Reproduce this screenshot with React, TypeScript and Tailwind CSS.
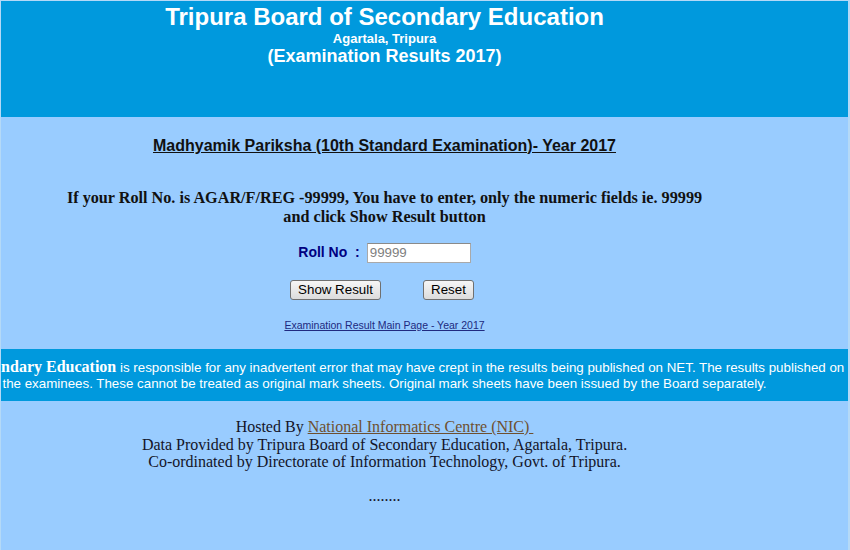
// Tripura Board result lookup page (TBSE 2017).
export default function App() {
  return (
    <div className="min-h-screen bg-[#b4d9f7] pl-px pr-[2px] pt-px font-['Liberation_Sans',Arial,sans-serif]">
      <div className="min-h-[549px] bg-[#99ccff]">
        {/* Bandeau */}
        <header className="h-[116px] bg-[#0099dd] pt-[2px] text-white">
          <div className="w-[767px] text-center font-bold leading-[normal]">
            <h1 className="text-[24px]">Tripura Board of Secondary Education</h1>
            <p className="text-[13px]">Agartala, Tripura</p>
            <p className="text-[18px]">(Examination Results 2017)</p>
          </div>
        </header>

        {/* Formulaire */}
        <main className="w-[767px] pt-[20px] text-center">
          <h2 className="text-[16px] font-bold leading-[normal] text-[#111] underline">
            Madhyamik Pariksha (10th Standard Examination)- Year 2017
          </h2>
          <p className="mt-[34px] font-['Liberation_Serif','Times_New_Roman',serif] text-[16.2px] font-bold leading-[normal] text-[#111]">
            If your Roll No. is AGAR/F/REG -99999, You have to enter, only the numeric fields ie. 99999
            <br />
            and click Show Result button
          </p>

          <div className="mt-[15px] flex items-center justify-center gap-[7px]">
            <label className="text-[14px] font-bold text-[#000080]">Roll No&nbsp; :</label>
            <input
              className="h-[20px] w-[104px] border border-[#a9a9a9] border-t-[#8a8a8a] bg-white px-[2px] text-[13.33px] text-[#808080] outline-none"
              defaultValue="99999"
            />
          </div>

          <div className="mt-[17px] flex items-center justify-center gap-[42px] pr-[5px]">
            <button className="h-[20px] w-[91px] rounded-[3px] border border-[#707070] bg-gradient-to-b from-[#f6f6f6] to-[#dcdcdc] text-[13.33px] leading-none text-black">
              Show Result
            </button>
            <button className="h-[20px] w-[51px] rounded-[3px] border border-[#707070] bg-gradient-to-b from-[#f6f6f6] to-[#dcdcdc] text-[13.33px] leading-none text-black">
              Reset
            </button>
          </div>

          <a href="#" className="mt-[19px] block text-[10.5px] leading-[12px] text-[#202a80] underline">
            Examination Result Main Page - Year 2017
          </a>
        </main>

        <section className="mt-[18px] h-[52px] overflow-hidden bg-[#0099dd] pt-[10px] text-[13.33px] text-white">
          <div className="-ml-[31px] whitespace-nowrap leading-[16px]">
            <b className="font-['Liberation_Serif','Times_New_Roman',serif] text-[16px]">Secondary Education</b> is responsible for any
            inadvertent error that may have crept in the results being published on NET. The results published on net are for
            immediate information to
          </div>
          <div className="w-[767px] whitespace-nowrap text-center leading-[16px]">
            the examinees. These cannot be treated as original mark sheets. Original mark sheets have been issued by the Board separately.
          </div>
        </section>

        {/* Pied de page */}
        <footer className="w-[767px] pt-[17px] text-center font-['Liberation_Serif','Times_New_Roman',serif] text-[16px] leading-[17.6px] text-[#141428]">
          <p>
            Hosted By{' '}
            <a href="#" className="text-[#6e5030] underline">
              National Informatics Centre (NIC)&nbsp;
            </a>
          </p>
          <p>Data Provided by Tripura Board of Secondary Education, Agartala, Tripura.</p>
          <p>Co-ordinated by Directorate of Information Technology, Govt. of Tripura.</p>
          <p className="mt-[16px]">........</p>
        </footer>
      </div>
    </div>
  );
}
